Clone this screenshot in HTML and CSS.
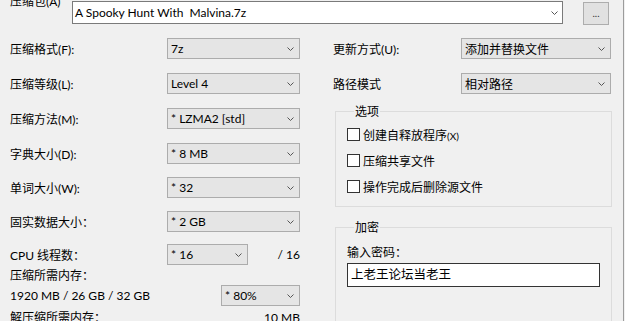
FILE: index.html
```html
<!DOCTYPE html>
<html lang="zh-CN">
<head>
<meta charset="utf-8">
<title>添加到压缩包</title>
<link rel="stylesheet" href="styles.css">
</head>
<body>
<div class="page">
  <div class="archive-label">压缩包(A)</div>
  <div class="archive-row">
    <div class="combo combo-edit archive-combo"><span class="combo-text">A Spooky Hunt With&nbsp; Malvina.7z</span><svg class="chev" width="7" height="4" viewBox="0 0 7 4"><path d="M0.5 0.5 L3.5 3.5 L6.5 0.5" fill="none" stroke="#555" stroke-width="1"/></svg></div>
    <div class="browse">...</div>
  </div>
  <div class="main">
    <div class="left">
      <div class="row wide"><span class="label">压缩格式(F):</span><div class="combo"><span class="combo-text">7z</span><svg class="chev" width="7" height="4" viewBox="0 0 7 4"><path d="M0.5 0.5 L3.5 3.5 L6.5 0.5" fill="none" stroke="#555" stroke-width="1"/></svg></div></div>
      <div class="row wide"><span class="label">压缩等级(L):</span><div class="combo"><span class="combo-text">Level 4</span><svg class="chev" width="7" height="4" viewBox="0 0 7 4"><path d="M0.5 0.5 L3.5 3.5 L6.5 0.5" fill="none" stroke="#555" stroke-width="1"/></svg></div></div>
      <div class="row wide"><span class="label">压缩方法(M):</span><div class="combo"><span class="combo-text">* LZMA2 [std]</span><svg class="chev" width="7" height="4" viewBox="0 0 7 4"><path d="M0.5 0.5 L3.5 3.5 L6.5 0.5" fill="none" stroke="#555" stroke-width="1"/></svg></div></div>
      <div class="row"><span class="label">字典大小(D):</span><div class="combo"><span class="combo-text">* 8 MB</span><svg class="chev" width="7" height="4" viewBox="0 0 7 4"><path d="M0.5 0.5 L3.5 3.5 L6.5 0.5" fill="none" stroke="#555" stroke-width="1"/></svg></div></div>
      <div class="row"><span class="label">单词大小(W):</span><div class="combo"><span class="combo-text">* 32</span><svg class="chev" width="7" height="4" viewBox="0 0 7 4"><path d="M0.5 0.5 L3.5 3.5 L6.5 0.5" fill="none" stroke="#555" stroke-width="1"/></svg></div></div>
      <div class="row"><span class="label">固实数据大小：</span><div class="combo"><span class="combo-text">* 2 GB</span><svg class="chev" width="7" height="4" viewBox="0 0 7 4"><path d="M0.5 0.5 L3.5 3.5 L6.5 0.5" fill="none" stroke="#555" stroke-width="1"/></svg></div></div>
      <div class="row cpu"><span class="label">CPU 线程数：</span><div class="combo combo-small"><span class="combo-text">* 16</span><svg class="chev" width="7" height="4" viewBox="0 0 7 4"><path d="M0.5 0.5 L3.5 3.5 L6.5 0.5" fill="none" stroke="#555" stroke-width="1"/></svg></div><span class="total">/ 16</span></div>
      <div class="mem">
        <div class="mem-title">压缩所需内存：</div>
        <div class="mem-row"><span class="mem-val">1920 MB / 26 GB / 32 GB</span><div class="combo combo-pct"><span class="combo-text">* 80%</span><svg class="chev" width="7" height="4" viewBox="0 0 7 4"><path d="M0.5 0.5 L3.5 3.5 L6.5 0.5" fill="none" stroke="#555" stroke-width="1"/></svg></div></div>
        <div class="mem-row2"><span>解压缩所需内存：</span><span>10 MB</span></div>
      </div>
    </div>
    <div class="right">
      <div class="row wide"><span class="rlabel">更新方式(U):</span><div class="combo combo-wide"><span class="combo-text">添加并替换文件</span><svg class="chev" width="7" height="4" viewBox="0 0 7 4"><path d="M0.5 0.5 L3.5 3.5 L6.5 0.5" fill="none" stroke="#555" stroke-width="1"/></svg></div></div>
      <div class="row"><span class="rlabel">路径模式</span><div class="combo combo-wide"><span class="combo-text">相对路径</span><svg class="chev" width="7" height="4" viewBox="0 0 7 4"><path d="M0.5 0.5 L3.5 3.5 L6.5 0.5" fill="none" stroke="#555" stroke-width="1"/></svg></div></div>
      <fieldset class="group options">
        <legend>选项</legend>
        <div class="check"><span class="box"></span><span>创建自释放程序<span class="small">(X)</span></span></div>
        <div class="check"><span class="box"></span><span>压缩共享文件</span></div>
        <div class="check"><span class="box"></span><span>操作完成后删除源文件</span></div>
      </fieldset>
      <fieldset class="group crypt">
        <legend>加密</legend>
        <div class="pw-label">输入密码：</div>
        <div class="pw-input">上老王论坛当老王</div>
      </fieldset>
    </div>
  </div>
</div>
</body>
</html>
```

FILE: styles.css
```css
html, body {
  margin: 0;
  padding: 0;
  background: #f0f0f0;
}

.page {
  width: 623px;
  height: 321px;
  overflow: hidden;
  border-right: 1px solid #9c9c9c;
  background: #f0f0f0;
  font-family: Lato, "Noto Sans CJK SC", sans-serif;
  font-size: 12px;
  color: #000;
}

.archive-label {
  margin: -7px 0 -10px 10px;
  line-height: 17px;
  height: 17px;
}

.archive-row {
  display: flex;
  margin: 1px 0 0 72px;
  gap: 20px;
}

.combo {
  box-sizing: border-box;
  height: 21px;
  width: 133px;
  display: flex;
  align-items: center;
  justify-content: space-between;
  background: #e5e5e5;
  border: 1px solid #acacac;
  padding: 0 5px 0 3px;
}

.combo-text {
  white-space: nowrap;
}

.chev {
  display: block;
  flex: none;
}

.combo-edit {
  background: #fff;
  border-color: #7a7a7a;
  padding: 0 4px 0 2px;
}

.archive-combo {
  width: 491px;
  height: 23px;
}

.browse {
  box-sizing: border-box;
  width: 26px;
  height: 23px;
  margin-top: 1px;
  background: #e1e1e1;
  border: 1px solid #adadad;
  text-align: center;
  font-size: 10px;
  line-height: 20px;
  color: #333;
}

.main {
  display: flex;
  margin-top: 13px;
}

.left {
  width: 290px;
  padding-left: 10px;
  display: flex;
  flex-direction: column;
  gap: 13px;
}

.right {
  width: 290px;
  padding-left: 33px;
  display: flex;
  flex-direction: column;
  gap: 13px;
}

.row {
  display: flex;
  align-items: center;
  height: 21px;
}

.row.wide {
  margin-bottom: 1px;
}

.row.cpu {
  margin-top: -1px;
}

.label {
  width: 157px;
  flex: none;
}

.rlabel {
  width: 128px;
  flex: none;
}

.combo-wide {
  width: 150px;
}

.combo-small {
  width: 81px;
}

.total {
  margin-left: auto;
}

.mem {
  margin-top: -10px;
}

.mem-title {
  line-height: 16px;
}

.mem-row {
  display: flex;
  align-items: center;
  justify-content: space-between;
  margin-top: 1px;
}

.combo-pct {
  width: 79px;
}

.mem-row2 {
  display: flex;
  justify-content: space-between;
  margin-top: 4px;
  line-height: 16px;
}

.group {
  box-sizing: border-box;
  margin: 0 0 0 2px;
  width: 277px;
  border: 1px solid #dcdcdc;
  padding: 1px 0 7px 11px;
  min-width: 0;
}

.group legend {
  padding: 0 1px;
  margin-left: 7px;
  line-height: 17px;
}

.options {
  margin-top: -4px;
}

.check {
  display: flex;
  align-items: center;
  height: 26px;
  gap: 3px;
}

.box {
  box-sizing: border-box;
  width: 13px;
  height: 13px;
  background: #fff;
  border: 1px solid #333;
}

.small {
  font-size: 10px;
}

.crypt {
  margin-top: -1px;
  height: 140px;
}

.pw-label {
  margin-top: 8px;
  line-height: 16px;
}

.pw-input {
  box-sizing: border-box;
  width: 253px;
  height: 24px;
  margin-top: 2px;
  background: #fff;
  border: 1px solid #333;
  padding-left: 3px;
  line-height: 22px;
  font-size: 12.5px;
}
```
